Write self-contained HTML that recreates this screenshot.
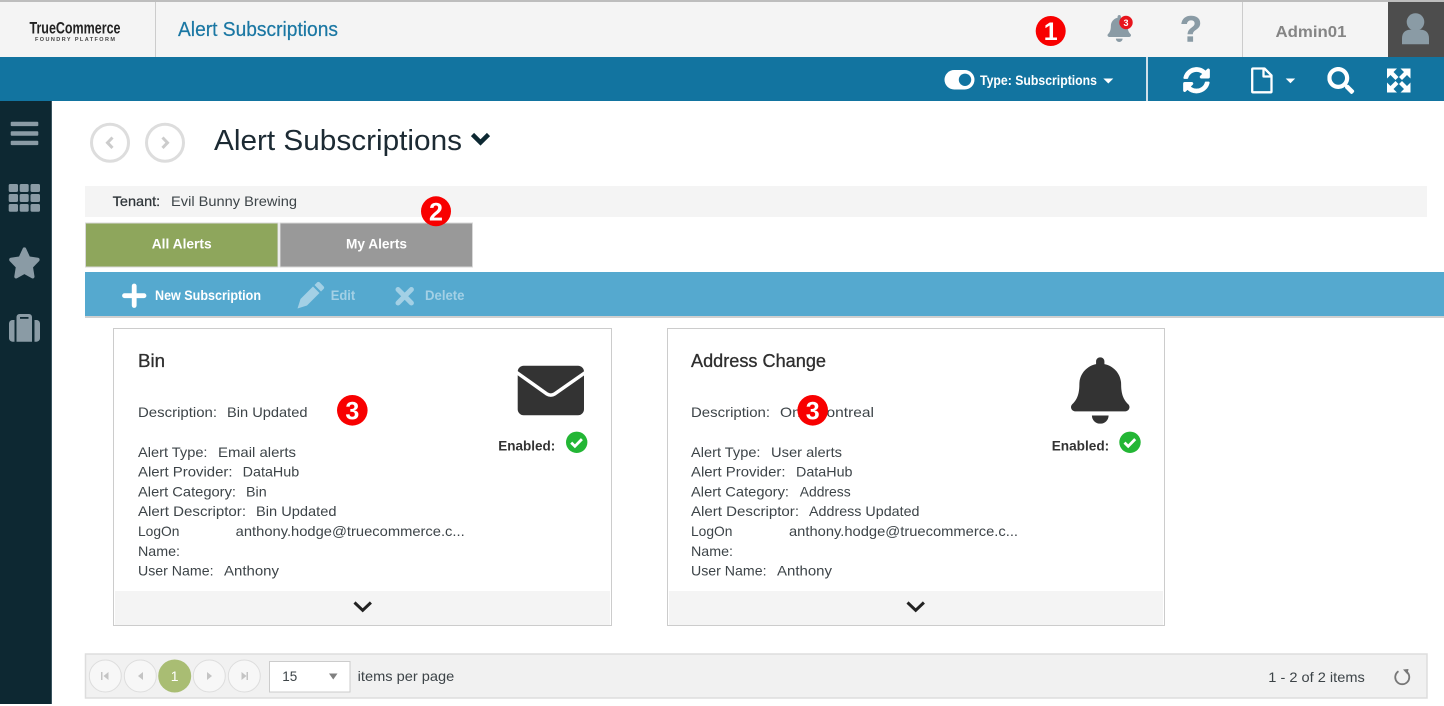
<!DOCTYPE html>
<html>
<head>
<meta charset="utf-8">
<title>Alert Subscriptions</title>
<style>
html,body{margin:0;padding:0;background:#fff;width:1444px;height:706px;overflow:hidden}
svg{display:block}
text{font-family:"Liberation Sans",sans-serif;white-space:pre}
.b{font-size:14px;fill:#3d4448}
.w{font-size:14px;fill:#fff;font-weight:bold}
.n{font-weight:bold;fill:#fff;text-anchor:middle}
.ic{fill:#8a9ba5}
</style>
</head>
<body>
<svg width="1444" height="706" viewBox="0 0 1444 706" xmlns="http://www.w3.org/2000/svg">
<defs>
<path id="chk" d="M-5.500 0.300 L-1.800 4 L5.200 -3.200" fill="none" stroke="#fff" stroke-width="2.800"/>
</defs>
<!-- top -->
<rect width="1444" height="2" fill="#bdbdbd"/>
<rect y="2" width="1444" height="55" fill="#f4f4f4"/>
<rect x="155" y="2" width="1" height="55" fill="#ccc"/>
<rect x="1242" y="2" width="1" height="55" fill="#ccc"/>
<rect x="1388" y="2" width="56" height="55" fill="#4d4d4d"/>
<text x="29.500" y="33.500" font-size="17" font-weight="bold" fill="#222" textLength="91" lengthAdjust="spacingAndGlyphs">TrueCommerce</text>
<text x="35" y="40.800" font-size="5.500" font-weight="bold" fill="#444" textLength="80" lengthAdjust="spacing">FOUNDRY PLATFORM</text>
<text x="178" y="36" font-size="20" fill="#1a77a3" stroke="#1a77a3" stroke-width=".2" textLength="160" lengthAdjust="spacingAndGlyphs">Alert Subscriptions</text>
<!-- header bell -->
<svg x="1107.500" y="15" width="23.500" height="27" viewBox="0 0 448 512" preserveAspectRatio="none"><path class="ic" d="M224 512c35.320 0 63.970-28.650 63.970-64H160.030c0 35.350 28.650 64 63.970 64zm215.390-149.710c-19.320-20.760-55.470-51.990-55.470-154.290 0-77.700-54.480-139.900-127.940-155.160V32c0-17.670-14.320-32-31.980-32s-31.980 14.330-31.980 32v20.840C118.560 68.100 64.080 130.300 64.080 208c0 102.300-36.150 133.530-55.470 154.290-6 6.450-8.660 14.160-8.610 21.710.11 16.400 12.980 32 32.100 32h383.800c19.120 0 32-15.600 32.100-32 .05-7.550-2.610-15.270-8.610-21.710z"/></svg>
<circle cx="1126" cy="22.500" r="6.700" fill="#e8141c"/>
<text x="1126" y="25.800" font-size="9" class="n">3</text>
<text x="1191" y="41.500" font-size="36" font-weight="bold" fill="#8a9ba5" stroke="#8a9ba5" stroke-width=".6" text-anchor="middle">?</text>
<text x="1275.500" y="37" font-size="16" font-weight="bold" fill="#858585" textLength="71" lengthAdjust="spacingAndGlyphs">Admin01</text>
<!-- user -->
<circle cx="1415.500" cy="22" r="8.800" class="ic"/>
<path class="ic" d="M1402 44.300 v-6 c0-6 4-8.500 8-8.500 h11 c4 0 8 2.500 8 8.500 v6 z" />
<!-- blue bar -->
<rect y="57" width="1444" height="44" fill="#1274a0"/>
<rect x="1146" y="57" width="2" height="44" fill="#cfe0ea"/>
<rect x="944.500" y="70" width="30" height="19.500" rx="9.750" fill="#fff"/>
<circle cx="965" cy="79.800" r="6.200" fill="#1274a0"/>
<text x="980" y="85" class="w" textLength="117" lengthAdjust="spacingAndGlyphs">Type: Subscriptions</text>
<path d="M1103.300 78.500h10l-5 5z" fill="#fff"/>
<svg x="1183" y="67" width="27" height="26.500" viewBox="0 0 512 512" preserveAspectRatio="none"><path fill="#fff" stroke="#fff" stroke-width="10" d="M370.720 133.280C339.458 104.008 298.888 87.962 255.848 88c-77.458.068-144.328 53.178-162.791 126.850-1.344 5.363-6.122 9.150-11.651 9.150H24.103c-7.498 0-13.194-6.807-11.807-14.176C33.933 94.924 134.813 8 256 8c66.448 0 126.791 26.136 171.315 68.685L463.030 40.970C478.149 25.851 504 36.559 504 57.941V192c0 13.255-10.745 24-24 24H345.941c-21.382 0-32.090-25.851-16.971-40.971l41.750-41.749zM32 296h134.059c21.382 0 32.090 25.851 16.971 40.971l-41.750 41.750c31.262 29.273 71.835 45.319 114.876 45.280 77.418-.07 144.315-53.144 162.787-126.849 1.344-5.363 6.122-9.150 11.651-9.150h57.304c7.498 0 13.194 6.807 11.807 14.176C478.067 417.076 377.187 504 256 504c-66.448 0-126.791-26.136-171.315-68.685L48.970 471.030C33.851 486.149 8 475.441 8 454.059V320c0-13.255 10.745-24 24-24z"/></svg>
<path d="M1253 68.500 h11.500 l7 7 v16 a0.800 0.800 0 0 1 -0.800 0.800 h-17.700 a0.800 0.800 0 0 1 -0.800 -0.800 v-22.200 a0.800 0.800 0 0 1 0.800 -0.800z M1263.500 68.500 v8 h8" fill="none" stroke="#fff" stroke-width="2.300" stroke-linejoin="round"/>
<path d="M1285.700 78.500h9.500l-4.750 4.800z" fill="#fff"/>
<svg x="1327.300" y="67" width="27" height="27" viewBox="0 0 512 512"><path fill="#fff" d="M505 442.700L405.300 343c-4.500-4.500-10.600-7-17-7H372c27.600-35.300 44-79.700 44-128C416 93.100 322.900 0 208 0S0 93.100 0 208s93.100 208 208 208c48.300 0 92.700-16.400 128-44v16.300c0 6.400 2.500 12.500 7 17l99.700 99.700c9.400 9.400 24.600 9.400 33.900 0l28.300-28.300c9.400-9.400 9.400-24.600.1-34zM208 336c-70.700 0-128-57.200-128-128 0-70.700 57.200-128 128-128 70.700 0 128 57.200 128 128 0 70.700-57.200 128-128 128z"/></svg>
<g fill="#fff">
<path d="M1387 68.500h10l-3.500 3.500 5 5 -3 3 -5 -5 -3.500 3.500z"/>
<path d="M1410.500 68.500h-10l3.500 3.500 -5 5 3 3 5 -5 3.500 3.500z"/>
<path d="M1387 92.500h10l-3.500 -3.500 5 -5 -3 -3 -5 5 -3.500 -3.500z"/>
<path d="M1410.500 92.500h-10l3.500 -3.500 -5 -5 3 -3 5 5 3.500 -3.500z"/>
</g>
<!-- sidebar -->
<rect y="101" width="52" height="603" fill="#0d2832"/>
<rect x="51" y="101" width="1" height="603" fill="#3b5560"/>
<g class="ic">
<rect x="10.700" y="121.700" width="27.600" height="4.400" rx="1"/>
<rect x="10.700" y="131.300" width="27.600" height="4.400" rx="1"/>
<rect x="10.700" y="140.700" width="27.600" height="4.400" rx="1"/>
<rect x="8.700" y="184" width="9.300" height="8" rx="1.500"/><rect x="19.700" y="184" width="9" height="8" rx="1.500"/><rect x="30.500" y="184" width="9.500" height="8" rx="1.500"/>
<rect x="8.700" y="194" width="9.300" height="8" rx="1.500"/><rect x="19.700" y="194" width="9" height="8" rx="1.500"/><rect x="30.500" y="194" width="9.500" height="8" rx="1.500"/>
<rect x="8.700" y="204" width="9.300" height="7.800" rx="1.500"/><rect x="19.700" y="204" width="9" height="7.800" rx="1.500"/><rect x="30.500" y="204" width="9.500" height="7.800" rx="1.500"/>
</g>
<svg x="8" y="247.300" width="32.800" height="31.200" viewBox="0 0 576 512" preserveAspectRatio="none"><path class="ic" d="M259.300 17.800L194 150.200 47.900 171.500c-26.200 3.800-36.700 36.100-17.700 54.600l105.700 103-25 145.500c-4.500 26.300 23.200 46 46.400 33.700L288 439.600l130.700 68.700c23.200 12.200 50.900-7.400 46.400-33.700l-25-145.500 105.700-103c19-18.500 8.500-50.800-17.700-54.600L382 150.200 316.700 17.800c-11.700-23.600-45.600-23.900-57.400 0z"/></svg>
<path class="ic" d="M14.500 320 v21.700 h-2 a3.500 3.500 0 0 1 -3.500 -3.500 v-14.700 a3.500 3.500 0 0 1 3.500 -3.500z M34.500 320 h2 a3.500 3.500 0 0 1 3.500 3.500 v14.700 a3.500 3.500 0 0 1 -3.500 3.500 h-2z M16.500 341.700 v-24.700 a3 3 0 0 1 3 -3 h9.500 a3 3 0 0 1 3 3 v24.700z"/>
<rect x="20" y="317" width="8.500" height="1.800" fill="#0d2832"/>
<!-- title row -->
<circle cx="110" cy="142.700" r="18.500" fill="#fff" stroke="#ddd" stroke-width="3"/>
<circle cx="165" cy="142.700" r="18.500" fill="#fff" stroke="#ddd" stroke-width="3"/>
<path d="M112.500 137.500l-5 5.200 5 5.200" fill="none" stroke="#ccc" stroke-width="3"/>
<path d="M162.500 137.500l5 5.200 -5 5.200" fill="none" stroke="#ccc" stroke-width="3"/>
<text x="214" y="150" font-size="29" fill="#1c2a33" textLength="248" lengthAdjust="spacingAndGlyphs">Alert Subscriptions</text>
<path d="M472.500 134.500l8 8 8 -8" fill="none" stroke="#0d2832" stroke-width="4.500"/>
<!-- tenant -->
<rect x="85" y="186" width="1342" height="31" fill="#f4f4f4"/>
<text x="112.700" y="206" class="b" style="fill:#2e3438;stroke:#2e3438;stroke-width:.25" textLength="47.500" lengthAdjust="spacingAndGlyphs">Tenant:</text>
<text x="171" y="206" class="b" textLength="126" lengthAdjust="spacingAndGlyphs">Evil Bunny Brewing</text>
<!-- tabs -->
<rect x="85.500" y="223" width="192.500" height="44" fill="#8ea65c" stroke="#d8d8d8"/>
<rect x="280" y="223" width="192.500" height="44" fill="#999" stroke="#d8d8d8"/>
<text x="151.700" y="248.300" class="w" textLength="60" lengthAdjust="spacingAndGlyphs">All Alerts</text>
<text x="346" y="248.300" class="w" textLength="61" lengthAdjust="spacingAndGlyphs">My Alerts</text>
<!-- toolbar -->
<rect x="85" y="272" width="1359" height="44" fill="#55a9cf"/>
<rect x="85" y="316" width="1359" height="2" fill="#d0d0d0"/>
<path d="M134.200 286v19.500M124.500 295.700h19.500" fill="none" stroke="#fff" stroke-width="4.800" stroke-linecap="round"/>
<text x="155" y="300" class="w" textLength="106" lengthAdjust="spacingAndGlyphs">New Subscription</text>
<path d="M317 282.500 a2 2 0 0 1 2.800 0 l3.700 3.700 a2 2 0 0 1 0 2.800 l-2.500 2.500 -6.500 -6.500z M313 286.500 l6.500 6.500 -12.500 12.500 -9.500 3 3 -9.500z" fill="#a3d0e5"/>
<text x="330.700" y="300" class="w" style="fill:#a3d0e5" textLength="24.500" lengthAdjust="spacingAndGlyphs">Edit</text>
<path d="M398 289.500l6.700 6.700 6.700-6.700M398 303l6.700-6.800 6.700 6.800" fill="none" stroke="#a3d0e5" stroke-width="5" stroke-linecap="round"/>
<text x="425" y="300" class="w" style="fill:#a3d0e5" textLength="39.500" lengthAdjust="spacingAndGlyphs">Delete</text>
<!-- card 1 -->
<rect x="113.500" y="328.500" width="498" height="297" fill="#fff" stroke="#ccc"/>
<rect x="115" y="591" width="495" height="34" fill="#f4f4f4"/>
<text x="138" y="367" font-size="18" fill="#2e2e2e" stroke="#2e2e2e" stroke-width=".3" textLength="27" lengthAdjust="spacingAndGlyphs">Bin</text>
<text x="138" y="417" class="b" textLength="79" lengthAdjust="spacingAndGlyphs">Description:</text>
<text x="227" y="417" class="b" textLength="80.500" lengthAdjust="spacingAndGlyphs">Bin Updated</text>
<text x="138" y="457" class="b" textLength="69.500" lengthAdjust="spacingAndGlyphs">Alert Type:</text>
<text x="218" y="457" class="b" textLength="78" lengthAdjust="spacingAndGlyphs">Email alerts</text>
<text x="138" y="476.500" class="b" textLength="94.500" lengthAdjust="spacingAndGlyphs">Alert Provider:</text>
<text x="242.700" y="476.500" class="b" textLength="56.500" lengthAdjust="spacingAndGlyphs">DataHub</text>
<text x="138" y="496.500" class="b" textLength="98" lengthAdjust="spacingAndGlyphs">Alert Category:</text>
<text x="246" y="496.500" class="b" textLength="20.700" lengthAdjust="spacingAndGlyphs">Bin</text>
<text x="138" y="516" class="b" textLength="108" lengthAdjust="spacingAndGlyphs">Alert Descriptor:</text>
<text x="256" y="516" class="b" textLength="80.500" lengthAdjust="spacingAndGlyphs">Bin Updated</text>
<text x="138" y="536" class="b" textLength="41.500" lengthAdjust="spacingAndGlyphs">LogOn</text>
<text x="235.700" y="536" class="b" textLength="229" lengthAdjust="spacingAndGlyphs">anthony.hodge@truecommerce.c...</text>
<text x="138" y="556" class="b" textLength="42" lengthAdjust="spacingAndGlyphs">Name:</text>
<text x="138" y="575.500" class="b" textLength="75.500" lengthAdjust="spacingAndGlyphs">User Name:</text>
<text x="224" y="575.500" class="b" textLength="55" lengthAdjust="spacingAndGlyphs">Anthony</text>
<rect x="517.700" y="365.700" width="66.300" height="49.500" rx="6" fill="#333"/>
<path d="M516 372 L547 394 a7 7 0 0 0 7.500 0 L586 372" fill="none" stroke="#fff" stroke-width="3.500"/>
<text x="498.300" y="450.500" class="b" style="fill:#333;font-weight:bold" textLength="57" lengthAdjust="spacingAndGlyphs">Enabled:</text>
<circle cx="576.700" cy="442.300" r="10.700" fill="#23b635"/>
<use href="#chk" x="576.700" y="442.300"/>
<path d="M354.500 602.500l8.200 7.800 8.200-7.800" fill="none" stroke="#222" stroke-width="3"/>
<!-- card 2 -->
<rect x="667.500" y="328.500" width="497" height="297" fill="#fff" stroke="#ccc"/>
<rect x="669" y="591" width="494" height="34" fill="#f4f4f4"/>
<text x="691" y="367" font-size="18" fill="#2e2e2e" stroke="#2e2e2e" stroke-width=".3" textLength="135" lengthAdjust="spacingAndGlyphs">Address Change</text>
<text x="691" y="417" class="b" textLength="79" lengthAdjust="spacingAndGlyphs">Description:</text>
<text x="780" y="417" class="b" textLength="94" lengthAdjust="spacingAndGlyphs">One Montreal</text>
<text x="691" y="457" class="b" textLength="69.500" lengthAdjust="spacingAndGlyphs">Alert Type:</text>
<text x="771" y="457" class="b" textLength="71" lengthAdjust="spacingAndGlyphs">User alerts</text>
<text x="691" y="476.500" class="b" textLength="94.500" lengthAdjust="spacingAndGlyphs">Alert Provider:</text>
<text x="796" y="476.500" class="b" textLength="56.500" lengthAdjust="spacingAndGlyphs">DataHub</text>
<text x="691" y="496.500" class="b" textLength="98" lengthAdjust="spacingAndGlyphs">Alert Category:</text>
<text x="799.700" y="496.500" class="b" textLength="51" lengthAdjust="spacingAndGlyphs">Address</text>
<text x="691" y="516" class="b" textLength="108" lengthAdjust="spacingAndGlyphs">Alert Descriptor:</text>
<text x="809" y="516" class="b" textLength="110.500" lengthAdjust="spacingAndGlyphs">Address Updated</text>
<text x="691" y="536" class="b" textLength="41.500" lengthAdjust="spacingAndGlyphs">LogOn</text>
<text x="789" y="536" class="b" textLength="229" lengthAdjust="spacingAndGlyphs">anthony.hodge@truecommerce.c...</text>
<text x="691" y="556" class="b" textLength="42" lengthAdjust="spacingAndGlyphs">Name:</text>
<text x="691" y="575.500" class="b" textLength="75.500" lengthAdjust="spacingAndGlyphs">User Name:</text>
<text x="777" y="575.500" class="b" textLength="55" lengthAdjust="spacingAndGlyphs">Anthony</text>
<svg x="1071" y="357.300" width="58.500" height="66.500" viewBox="0 0 448 512" preserveAspectRatio="none"><path fill="#333" d="M224 512c35.320 0 63.970-28.650 63.970-64H160.030c0 35.350 28.650 64 63.970 64zm215.390-149.710c-19.320-20.760-55.470-51.990-55.470-154.290 0-77.700-54.480-139.900-127.940-155.160V32c0-17.670-14.320-32-31.980-32s-31.980 14.330-31.980 32v20.840C118.560 68.100 64.080 130.300 64.080 208c0 102.300-36.150 133.530-55.470 154.290-6 6.450-8.660 14.160-8.610 21.710.11 16.400 12.980 32 32.100 32h383.800c19.120 0 32-15.600 32.100-32 .05-7.550-2.610-15.270-8.610-21.710z"/></svg>
<text x="1051.700" y="450.500" class="b" style="fill:#333;font-weight:bold" textLength="57.500" lengthAdjust="spacingAndGlyphs">Enabled:</text>
<circle cx="1130" cy="442.300" r="10.700" fill="#23b635"/>
<use href="#chk" x="1130" y="442.300"/>
<path d="M907.500 602.500l8.200 7.800 8.200-7.800" fill="none" stroke="#222" stroke-width="3"/>
<!-- numbered badges -->
<circle cx="1050.700" cy="31" r="15" fill="#f80000"/>
<text x="1050.700" y="40" font-size="25" class="n">1</text>
<circle cx="436" cy="211.300" r="15" fill="#f80000"/>
<text x="436" y="220.300" font-size="25" class="n">2</text>
<circle cx="352.300" cy="410.300" r="15.300" fill="#f80000"/>
<text x="352.300" y="419.300" font-size="25" class="n">3</text>
<circle cx="812.700" cy="410.300" r="15.300" fill="#f80000"/>
<text x="812.700" y="419.300" font-size="25" class="n">3</text>
<!-- pager -->
<rect x="85.500" y="654" width="1341.500" height="44" fill="#f1f1f1" stroke="#ddd" stroke-width="1.500"/>
<g fill="#f7f7f7" stroke="#ddd">
<circle cx="105.300" cy="676" r="16"/><circle cx="140.300" cy="676" r="16"/><circle cx="209.300" cy="676" r="16"/><circle cx="244.300" cy="676" r="16"/>
</g>
<circle cx="174.700" cy="676" r="16.500" fill="#a9bd73"/>
<text x="174.700" y="681" font-size="14" fill="#fff" text-anchor="middle">1</text>
<g fill="#c4c4c4">
<rect x="101" y="672" width="1.500" height="8"/><path d="M108.500 672v8l-5-4z"/>
<path d="M143 672v8l-5-4z"/>
<path d="M207 672v8l5-4z"/>
<path d="M241.500 672v8l5-4z"/><rect x="246.500" y="672" width="1.500" height="8"/>
</g>
<rect x="269.500" y="661.500" width="80.500" height="30.500" fill="#fff" stroke="#ccc"/>
<text x="282.300" y="681" class="b" textLength="15" lengthAdjust="spacingAndGlyphs">15</text>
<path d="M329 673.500h8.500l-4.250 6z" fill="#808080"/>
<text x="357.700" y="681" class="b" textLength="96.500" lengthAdjust="spacingAndGlyphs">items per page</text>
<text x="1268.300" y="682" class="b" textLength="96.500" lengthAdjust="spacingAndGlyphs">1 - 2 of 2 items</text>
<path d="M1398.500 671.300 a7 7 0 1 0 7.500 0" fill="none" stroke="#777" stroke-width="1.800"/>
<path d="M1403 669.500l5.500-0.500 -1 5.500z" fill="#777"/>
</svg>
</body>
</html>
